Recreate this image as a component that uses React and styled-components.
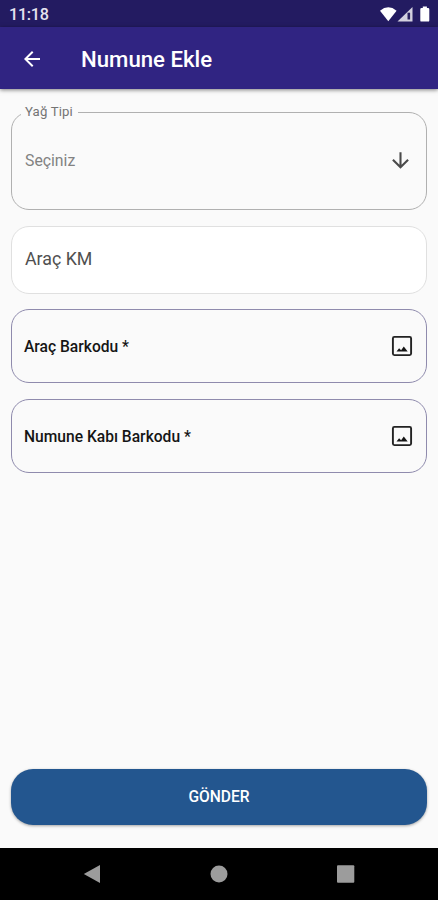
import React from "react";
import styled, { createGlobalStyle } from "styled-components";
import { MdArrowBack, MdArrowDownward } from "react-icons/md";

const GlobalStyle = createGlobalStyle`
  *, *::before, *::after { box-sizing: border-box; }
  body { margin: 0; background: #fafafa; font-family: Roboto, "Liberation Sans", sans-serif; }
`;

const Screen = styled.div`
  display: flex;
  flex-direction: column;
  height: 900px;
  background: #fafafa;
`;

const StatusBar = styled.div`
  display: flex;
  align-items: center;
  justify-content: space-between;
  flex: none;
  height: 27px;
  padding: 2px 7px 0 9px;
  background: #231b61;
  color: #e6e4f0;
`;

const Clock = styled.span`
  font-size: 16.2px;
  font-weight: 500;
  line-height: 24px;
  letter-spacing: -0.3px;
`;

const StatusIcons = styled.svg`
  display: block;
  width: 52px;
  height: 18px;
`;

const AppBar = styled.header`
  display: flex;
  align-items: center;
  flex: none;
  gap: 37px;
  height: 62px;
  padding: 1px 20px 0;
  background: #302482;
  color: #fff;
  box-shadow: 0 1px 4px rgba(0, 0, 0, 0.5);

  svg { display: block; }
`;

const Title = styled.h1`
  margin: 0;
  padding-top: 1px;
  font-size: 22.2px;
  font-weight: 500;
  line-height: 28px;
`;

const Form = styled.main`
  display: flex;
  flex-direction: column;
  flex: 1;
  padding: 15px 11px 23px;
`;

const Select = styled.fieldset`
  height: 106px;
  margin: 0;
  padding: 0 13px 0 9px;
  border: 1px solid #b0b0b0;
  border-radius: 18px;
`;

const Legend = styled.legend`
  height: 16px;
  padding: 0 5px 0 4px;
  font-size: 13.2px;
  line-height: 16px;
  letter-spacing: 0.15px;
  color: #747474;
`;

const SelectValue = styled.div`
  display: flex;
  align-items: center;
  justify-content: space-between;
  height: 81px;
  padding-left: 4px;
  color: #828282;
  font-size: 15.8px;
  line-height: 20px;

  svg { display: block; color: #4a4a4a; }
`;

const TextField = styled.div`
  display: flex;
  align-items: center;
  height: 68px;
  margin-top: 16px;
  padding: 0 13px 3px;
  border: 1px solid #e0e0e0;
  border-radius: 18px;
  background: #fff;
  color: #505050;
  font-size: 17.8px;
`;

const BarcodeField = styled.div`
  display: flex;
  align-items: center;
  justify-content: space-between;
  height: 74px;
  margin-top: ${({ $gap }) => $gap}px;
  padding: 0 11px 0 12px;
  border: 1px solid #8f8bad;
  border-radius: 18px;
  color: #151515;
  font-size: 15.6px;
  font-weight: 500;

  svg { display: block; }
`;

const BarcodeLabel = styled.span`
  padding-top: 2px;
`;

const SubmitButton = styled.button`
  height: 56px;
  margin-top: auto;
  padding: 0;
  border: 0;
  border-radius: 22px;
  background: #23568f;
  color: #fff;
  font-family: inherit;
  font-size: 15.6px;
  font-weight: 500;
  box-shadow: 0 1px 3px rgba(0, 0, 0, 0.35);
`;

const NavBar = styled.nav`
  display: flex;
  align-items: center;
  flex: none;
  justify-content: space-between;
  height: 52px;
  padding: 0 83px;
  background: #000;
  color: #9c9c9c;

  svg { display: block; }
`;

const ImageIcon = () => (
  <svg width="26" height="26" viewBox="0 0 26 26" fill="none">
    <rect x="3.9" y="3.9" width="18.2" height="18.2" rx="1.5" stroke="#222" strokeWidth="1.9" />
    <path d="M7.5 18.5l2.6-3.3 2 2.1 2.7-3.9 3.9 5.1z" fill="#151515" />
  </svg>
);

const barcodes = [
  { label: "Araç Barkodu *", gap: 15 },
  { label: "Numune Kabı Barkodu *", gap: 16 },
];

export default function App() {
  return (
    <Screen>
      <GlobalStyle />
      <StatusBar>
        <Clock>11:18</Clock>
        <StatusIcons viewBox="0 0 52 18" fill="#fff">
          <path d="M1 4.7Q9.3-2.2 17.6 4.7L9.3 15.3Z" />
          <path d="M18.5 15.5L33.500 1V15.5Z" opacity=".8" />
          <path d="M28.5 6.7h2.6v6.8h-2.6z" fill="#29215f" />
          <path d="M43.8 .6h4.1v1.4h1.2q1.2 0 1.2 1.2v11.2q0 1.2-1.2 1.2h-6.6q-1.2 0-1.2-1.2V3.2q0-1.2 1.2-1.2h1.3z" />
        </StatusIcons>
      </StatusBar>
      <AppBar>
        <MdArrowBack size={24} />
        <Title>Numune Ekle</Title>
      </AppBar>
      <Form>
        <Select>
          <Legend>Yağ Tipi</Legend>
          <SelectValue>
            <span>Seçiniz</span>
            <MdArrowDownward size={25} />
          </SelectValue>
        </Select>
        <TextField>Araç KM</TextField>
        {barcodes.map(({ label, gap }) => (
          <BarcodeField key={label} $gap={gap}>
            <BarcodeLabel>{label}</BarcodeLabel>
            <ImageIcon />
          </BarcodeField>
        ))}
        <SubmitButton type="button">GÖNDER</SubmitButton>
      </Form>
      <NavBar>
        <svg width="18" height="18" viewBox="0 0 18 18" fill="currentColor">
          <path d="M.8 9L17 0V18Z" />
        </svg>
        <svg width="18" height="18" viewBox="0 0 18 18" fill="currentColor">
          <circle cx="9" cy="9" r="8.5" />
        </svg>
        <svg width="18" height="18" viewBox="0 0 18 18" fill="currentColor">
          <rect x="0" y=".2" width="17.3" height="17.5" rx="1" />
        </svg>
      </NavBar>
    </Screen>
  );
}
